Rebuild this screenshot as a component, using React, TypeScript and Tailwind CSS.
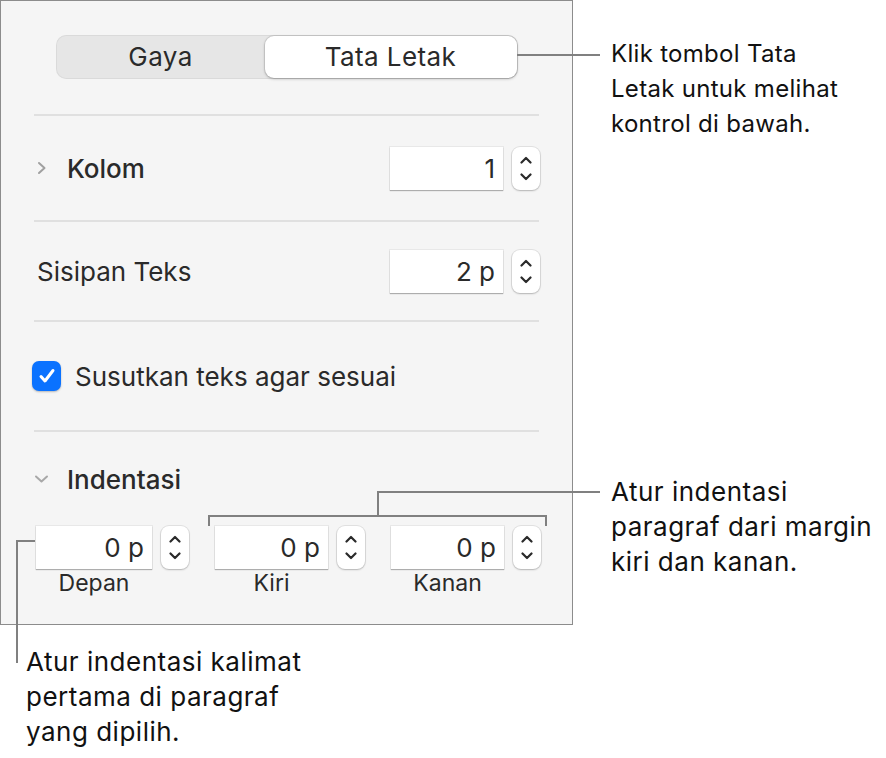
import React from 'react';

const Stepper = () => (
  <div className="w-[28px] h-[43px] rounded-[8px] bg-white shadow-[0_0_0_1px_rgba(0,0,0,0.08),0_1px_2px_rgba(0,0,0,0.2)] flex flex-col items-center justify-center gap-[9px]">
    <svg width="12" height="8" viewBox="0 0 12 8">
      <path d="M1.5 6.5 L6 2 L10.5 6.5" fill="none" stroke="#2a2a2a" strokeWidth="2.2" strokeLinecap="round" strokeLinejoin="round" />
    </svg>
    <svg width="12" height="8" viewBox="0 0 12 8">
      <path d="M1.5 1.5 L6 6 L10.5 1.5" fill="none" stroke="#2a2a2a" strokeWidth="2.2" strokeLinecap="round" strokeLinejoin="round" />
    </svg>
  </div>
);

const NumField = ({ value, w = 'w-[113px]' }: { value: string; w?: string }) => (
  <div className="flex items-center gap-[9px]">
    <div className={`${w} h-[43px] bg-white shadow-[0_0_0_1px_rgba(0,0,0,0.05),0_1px_1px_rgba(0,0,0,0.25)] flex items-center justify-end pr-[8px] text-[26px] text-[#2a2a2a]`}>
      {value}
    </div>
    <Stepper />
  </div>
);

const Divider = () => <div className="h-[2px] bg-[#e0e0e0] mx-[33px]" />;

export default function App() {
  return (
    <div className="relative w-[886px] h-[758px] bg-white overflow-hidden" style={{ fontFamily: 'Inter, "Noto Sans", sans-serif' }}>
      {/* Inspector panel */}
      <div className="w-[573px] h-[625px] bg-[#f5f5f5] border border-[#8c8c8c] flex flex-col text-[#2a2a2a]">
        <div className="pt-[34px] flex justify-center">
          <div className="w-[462px] h-[44px] rounded-[10px] bg-[#e6e6e6] shadow-[inset_0_0_0_1px_rgba(0,0,0,0.05)] flex p-[1px]">
            <div className="flex-1 flex items-center justify-center text-[26px] tracking-[0.4px] pb-[2px]">Gaya</div>
            <div className="w-[252px] rounded-[9px] bg-white shadow-[0_0_0_1px_rgba(0,0,0,0.08),0_1px_3px_rgba(0,0,0,0.25)] flex items-center justify-center text-[26px] tracking-[0.4px] pb-[2px]">
              Tata Letak
            </div>
          </div>
        </div>

        <div className="mt-[35px]"><Divider /></div>

        <div className="h-[104px] flex items-center justify-between pl-[36px] pr-[32px]">
          <div className="flex items-center gap-[20px]">
            <svg width="10" height="14" viewBox="0 0 10 14">
              <path d="M2 2 L7.5 7 L2 12" fill="none" stroke="#a0a0a0" strokeWidth="2" strokeLinecap="round" strokeLinejoin="round" />
            </svg>
            <span className="text-[26px] font-medium">Kolom</span>
          </div>
          <NumField value="1" />
        </div>

        <Divider />

        <div className="h-[98px] flex items-center justify-between pl-[36px] pr-[32px]">
          <span className="text-[26px]">Sisipan Teks</span>
          <NumField value="2 p" />
        </div>

        <Divider />

        <div className="h-[108px] flex items-center pl-[31px] gap-[14px]">
          <div className="w-[29px] h-[30px] rounded-[7px] bg-[#0a72ff] shadow-[0_1px_2px_rgba(0,0,0,0.25)] flex items-center justify-center">
            <svg width="18" height="16" viewBox="0 0 18 16">
              <path d="M3 8.5 L7 13 L15 2.5" fill="none" stroke="white" strokeWidth="3" strokeLinecap="round" strokeLinejoin="round" />
            </svg>
          </div>
          <span className="text-[26px]">Susutkan teks agar sesuai</span>
        </div>

        <Divider />

        <div className="flex flex-col">
          <div className="h-[94px] flex items-center pl-[33px] gap-[18px]">
            <svg width="15" height="10" viewBox="0 0 15 10">
              <path d="M2 2.5 L7.5 7.5 L13 2.5" fill="none" stroke="#a8a8a8" strokeWidth="2" strokeLinecap="round" strokeLinejoin="round" />
            </svg>
            <span className="text-[26px] font-medium">Indentasi</span>
          </div>
          <div className="flex pl-[35px] gap-[26px]">
            {[
              { v: '0 p', l: 'Depan', w: 'w-[116px]' },
              { v: '0 p', l: 'Kiri', w: 'w-[113px]' },
              { v: '0 p', l: 'Kanan', w: 'w-[113px]' },
            ].map((f) => (
              <div key={f.l} className="flex flex-col">
                <NumField value={f.v} w={f.w} />
                <div className={`${f.w} text-center text-[23px] mt-0 leading-[28px]`}>{f.l}</div>
              </div>
            ))}
          </div>
        </div>
      </div>

      {/* Callout: segmented control */}
      <div className="absolute left-[517px] top-[54px] w-[83px] h-[2px] bg-[#808080]" />
      <div className="absolute left-[611px] top-[36px] text-[24px] leading-[35px] tracking-[0.3px] text-[#111]">
        Klik tombol Tata<br />Letak untuk melihat<br />kontrol di bawah.
      </div>

      {/* Callout: left/right indent bracket */}
      <div className="absolute left-[377px] top-[491px] w-[223px] h-[2px] bg-[#808080]" />
      <div className="absolute left-[377px] top-[491px] w-[2px] h-[26px] bg-[#808080]" />
      <div className="absolute left-[208px] top-[515px] w-[339px] h-[11px] border-t-2 border-x-2 border-[#808080]" />
      <div className="absolute left-[611px] top-[474px] text-[26px] leading-[35px] tracking-[0.5px] text-[#111]">
        Atur indentasi<br />paragraf dari margin<br />kiri dan kanan.
      </div>

      {/* Callout: first-line indent */}
      <div className="absolute left-[16px] top-[540px] w-[19px] h-[2px] bg-[#808080]" />
      <div className="absolute left-[16px] top-[540px] w-[2px] h-[123px] bg-[#808080]" />
      <div className="absolute left-[26px] top-[644px] text-[26px] leading-[35px] tracking-[0.5px] text-[#111]">
        Atur indentasi kalimat<br />pertama di paragraf<br />yang dipilih.
      </div>
    </div>
  );
}
